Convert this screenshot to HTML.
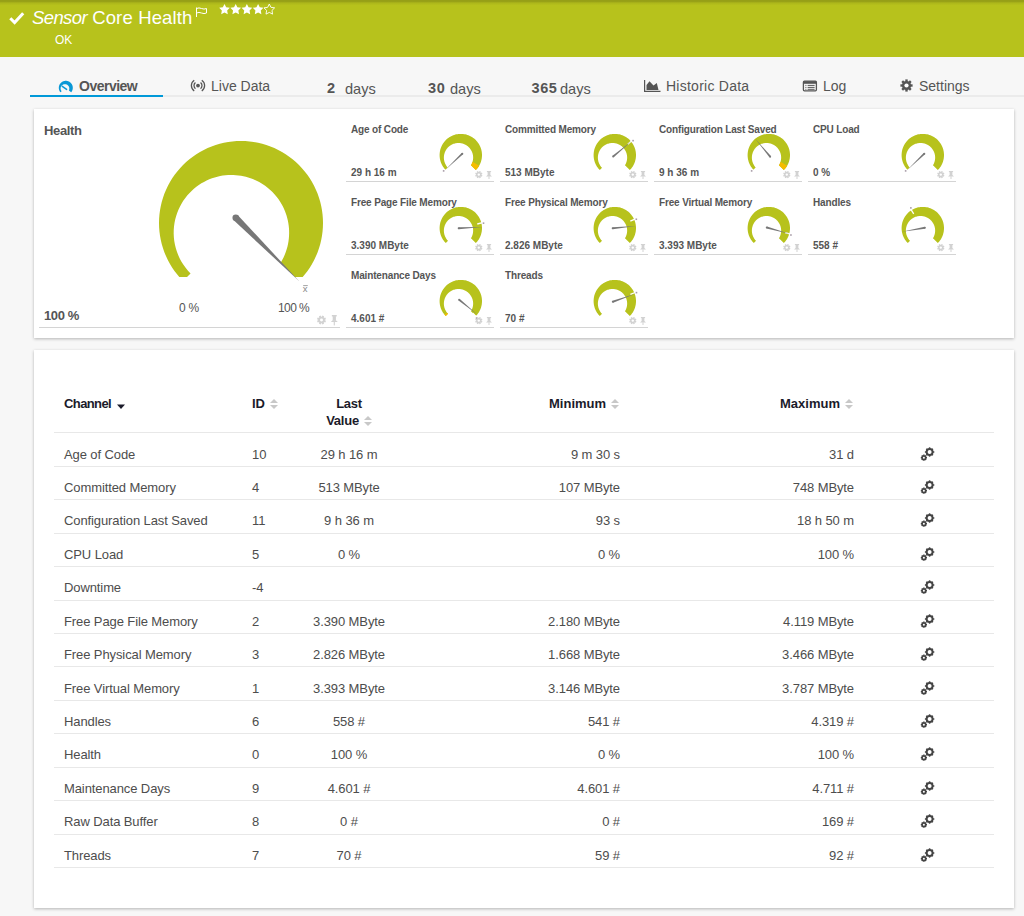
<!DOCTYPE html>
<html><head><meta charset="utf-8"><style>
*{box-sizing:border-box;margin:0;padding:0}
html,body{width:1024px;height:916px;overflow:hidden;background:#f7f7f7;font-family:"Liberation Sans",sans-serif;color:#545454}
.abs{position:absolute;white-space:nowrap}
#hdr{position:absolute;left:0;top:0;width:1024px;height:57px;background:linear-gradient(rgba(0,0,0,.19) 0px,rgba(0,0,0,.17) 1.5px,rgba(0,0,0,.06) 3px,rgba(0,0,0,0) 5.5px),#b7c21c}
#hdr .t{position:absolute;left:32px;top:7px;font-size:18.5px;color:#fff;line-height:22px;white-space:nowrap}
#hdr .ok{position:absolute;left:55px;top:33px;font-size:12px;color:#fff;line-height:14px}
.tab{position:absolute;top:78px;font-size:14px;line-height:16px;color:#555;white-space:nowrap}
.tab b{font-weight:bold}
#tabline{position:absolute;left:30px;top:95px;width:994px;height:2px;background:#ebebeb}
#tabsel{position:absolute;left:30px;top:95px;width:133px;height:2px;background:#0099d8}
.card{position:absolute;left:34px;width:980px;background:#fff;box-shadow:0 1px 3px rgba(0,0,0,.27)}
#c1{top:109px;height:229px}
#c2{top:350px;height:558px}
#gsvg{position:absolute;left:0;top:0}
.gt{position:absolute;font-size:10px;font-weight:bold;line-height:12px;white-space:nowrap;color:#555;letter-spacing:-0.15px}
.gv{position:absolute;font-size:10px;font-weight:bold;line-height:12px;white-space:nowrap;color:#555}
.gl{position:absolute;width:148px;height:1px;background:#d4d4d4}
.ht{position:absolute;font-size:13px;font-weight:bold;line-height:15px;color:#555;white-space:nowrap}
.hs{position:absolute;font-size:12px;line-height:14px;color:#555;white-space:nowrap}
.th{position:absolute;font-size:13px;font-weight:bold;line-height:17px;color:#1b1b2a;white-space:nowrap}
.hl{position:absolute;left:54px;width:940px;height:1px;background:#e8e8e8}
.tr{position:absolute;left:0;width:1024px;height:33px;font-size:13px;color:#4d4d4d;line-height:15px;letter-spacing:-0.1px}
.tr span{position:absolute;top:15px;white-space:nowrap}
.c1{left:64px}
.c2{left:252px}
.c3{left:249px;width:200px;text-align:center}
.c4{right:404px;text-align:right}
.c5{right:170px;text-align:right}
.cog{position:absolute;left:920px;top:15px}
.dn{top:80px;font-size:14.5px;letter-spacing:0.6px}
.dd{top:81px;font-size:14.6px}

</style></head>
<body>
<div id="hdr">
  <svg class="abs" style="left:9px;top:11px" width="16" height="14" viewBox="0 0 16 14"><path d="M1.3 7.3 L5.6 11.6 L14.2 2.2" fill="none" stroke="#fff" stroke-width="3"/></svg>
  <div class="t"><i style="letter-spacing:-0.6px">Sensor</i> <span style="letter-spacing:0.15px">Core Health</span></div>
  <svg class="abs" style="left:195px;top:7px" width="13" height="11" viewBox="0 0 13 11"><path d="M1.5 0.5 V10" fill="none" stroke="#fff" stroke-width="1"/><path d="M1.5 1.5 Q4 0.3 6.5 1.5 T11.5 1.5 V6 Q9 7.2 6.5 6 T1.5 6" fill="none" stroke="#fff" stroke-width="1"/></svg>
  <svg class="abs" style="left:219px;top:4px" width="58" height="12" viewBox="0 0 58 12"><g fill="#fff"><path id="st" d="M5.50 0.00 L7.15 3.33 L10.83 3.87 L8.16 6.47 L8.79 10.13 L5.50 8.40 L2.21 10.13 L2.84 6.47 L0.17 3.87 L3.85 3.33Z"/><use href="#st" x="11.2"/><use href="#st" x="22.4"/><use href="#st" x="33.6"/></g><use href="#st" x="44.8" fill="none" stroke="#fff" stroke-width="0.9"/></svg>
  <div class="ok">OK</div>
</div>
<div id="tabline"></div><div id="tabsel"></div>
<svg class="abs" style="left:0;top:0" width="200" height="100"><path d="M60.44,92.30 L60.21,92.01 L59.99,91.71 L59.80,91.40 L59.61,91.08 L59.45,90.75 L59.30,90.41 L59.17,90.06 L59.06,89.71 L58.97,89.35 L58.90,88.99 L58.85,88.62 L58.81,88.25 L58.80,87.89 L58.81,87.52 L58.83,87.15 L58.87,86.78 L58.94,86.42 L59.02,86.06 L59.12,85.70 L59.24,85.35 L59.38,85.01 L59.54,84.68 L59.71,84.35 L59.90,84.03 L60.11,83.73 L60.33,83.43 L60.57,83.15 L60.82,82.88 L61.09,82.62 L61.37,82.38 L61.66,82.16 L61.96,81.95 L62.28,81.75 L62.60,81.57 L62.93,81.41 L63.27,81.27 L63.62,81.15 L63.97,81.04 L64.33,80.96 L64.70,80.89 L65.06,80.84 L65.43,80.81 L65.80,80.80 L66.17,80.81 L66.54,80.84 L66.90,80.89 L67.27,80.96 L67.63,81.04 L67.98,81.15 L68.33,81.27 L68.67,81.41 L69.00,81.57 L69.32,81.75 L69.64,81.95 L69.94,82.16 L70.23,82.38 L70.51,82.62 L70.78,82.88 L71.03,83.15 L71.27,83.43 L71.49,83.73 L71.70,84.03 L71.89,84.35 L72.06,84.68 L72.22,85.01 L72.36,85.35 L72.48,85.70 L72.58,86.06 L72.66,86.42 L72.73,86.78 L72.77,87.15 L72.79,87.52 L72.80,87.89 L72.79,88.25 L72.75,88.62 L72.70,88.99 L72.63,89.35 L72.54,89.71 L72.43,90.06 L72.30,90.41 L72.15,90.75 L71.99,91.08 L71.80,91.40 L71.61,91.71 L71.39,92.01 L71.16,92.30 L68.87,90.38 L68.96,90.18 L69.04,89.98 L69.11,89.78 L69.16,89.58 L69.21,89.38 L69.25,89.18 L69.27,88.98 L69.29,88.79 L69.30,88.59 L69.30,88.40 L69.29,88.21 L69.27,88.03 L69.25,87.84 L69.22,87.66 L69.18,87.48 L69.13,87.31 L69.08,87.14 L69.02,86.97 L68.96,86.81 L68.89,86.65 L68.81,86.49 L68.72,86.34 L68.64,86.19 L68.54,86.05 L68.44,85.91 L68.34,85.77 L68.23,85.64 L68.11,85.52 L67.99,85.39 L67.87,85.28 L67.74,85.16 L67.60,85.06 L67.46,84.95 L67.31,84.85 L67.16,84.76 L67.01,84.67 L66.85,84.59 L66.69,84.52 L66.52,84.45 L66.34,84.39 L66.17,84.33 L65.99,84.28 L65.80,84.24 L65.61,84.21 L65.42,84.18 L65.22,84.17 L65.02,84.16 L64.82,84.16 L64.61,84.17 L64.40,84.20 L64.20,84.23 L63.99,84.27 L63.77,84.32 L63.56,84.39 L63.35,84.47 L63.15,84.56 L62.94,84.66 L62.74,84.77 L62.54,84.90 L62.34,85.04 L62.15,85.19 L61.97,85.35 L61.79,85.53 L61.63,85.72 L61.47,85.92 L61.32,86.13 L61.19,86.35 L61.07,86.58 L60.96,86.82 L60.86,87.07 L60.78,87.33 L60.72,87.59 L60.67,87.86 L60.64,88.14 L60.62,88.41 L60.62,88.69 L60.65,88.97 L60.69,89.25 L60.74,89.53 L60.82,89.80 L60.91,90.07 L61.02,90.33 L61.15,90.58 L61.30,90.83 L61.46,91.07 L61.64,91.29Z" fill="#0a98d6"/><line x1="62.3" y1="86.3" x2="66.6" y2="89.4" stroke="#0a98d6" stroke-width="1.5" stroke-linecap="round"/></svg>
<div class="tab" style="left:79px;font-weight:bold;letter-spacing:-0.5px">Overview</div>
<svg class="abs" style="left:190px;top:79px" width="16" height="14" viewBox="0 0 16 14"><g fill="none" stroke="#555" stroke-width="1.3"><path d="M10.57 3.54 A4.0 4.0 0 0 1 10.57 9.66"/><path d="M11.79 1.19 A6.6 6.6 0 0 1 11.79 12.01"/><path d="M5.43 9.66 A4.0 4.0 0 0 1 5.43 3.54"/><path d="M4.21 12.01 A6.6 6.6 0 0 1 4.21 1.19"/></g><circle cx="8" cy="6.6" r="1.9" fill="#555"/></svg>
<div class="tab" style="left:211px">Live Data</div>
<div class="tab dn" style="left:327px"><b>2</b></div><div class="tab dd" style="left:345px">days</div><div class="tab dn" style="left:428px"><b>30</b></div><div class="tab dd" style="left:450px">days</div><div class="tab dn" style="left:531.5px"><b>365</b></div><div class="tab dd" style="left:560px">days</div>


<svg class="abs" style="left:644px;top:80px" width="17" height="12" viewBox="0 0 17 12"><path d="M0.6 0 V11.4 H16.5" fill="none" stroke="#555" stroke-width="1.2"/><path d="M2.5 10 V5 L5.5 1.3 L9.5 5.5 L12.8 3 L14.5 10Z" fill="#555"/></svg>
<div class="tab" style="left:666px;letter-spacing:0.25px">Historic Data</div>
<svg class="abs" style="left:802px;top:79.7px" width="16" height="12" viewBox="0 0 16 12"><rect x="1.4" y="1.2" width="13" height="9.6" rx="1" fill="none" stroke="#555" stroke-width="1.3"/><rect x="1.4" y="1.2" width="13" height="2.6" fill="#555"/><g stroke="#555" stroke-width="1"><line x1="3.4" y1="5.4" x2="4.4" y2="5.4"/><line x1="5.6" y1="5.4" x2="12.6" y2="5.4"/><line x1="3.4" y1="7.4" x2="4.4" y2="7.4"/><line x1="5.6" y1="7.4" x2="12.6" y2="7.4"/><line x1="3.4" y1="9.3" x2="4.4" y2="9.3"/><line x1="5.6" y1="9.3" x2="12.6" y2="9.3"/></g></svg>
<div class="tab" style="left:823px">Log</div>
<svg class="abs" style="left:900px;top:79px" width="13" height="13" viewBox="0 0 13 13"><circle cx="6.5" cy="6.5" r="4.6" fill="#555"/><g stroke="#555" stroke-width="2.4"><line x1="6.5" y1="0.4" x2="6.5" y2="12.6"/><line x1="0.4" y1="6.5" x2="12.6" y2="6.5"/><line x1="2.2" y1="2.2" x2="10.8" y2="10.8"/><line x1="10.8" y1="2.2" x2="2.2" y2="10.8"/></g><circle cx="6.5" cy="6.5" r="2.1" fill="#fff"/></svg>
<div class="tab" style="left:919px">Settings</div>

<div class="card" id="c1"></div>
<div class="card" id="c2"></div>

<div class="ht" style="left:44px;top:123px;letter-spacing:-0.35px">Health</div>
<div class="ht" style="left:44px;top:308px;letter-spacing:-0.4px">100 %</div>
<div class="hs" style="left:179px;top:301px;letter-spacing:-0.3px">0 %</div>
<div class="hs" style="left:278px;top:301px;letter-spacing:-0.6px">100 %</div>
<div style="position:absolute;left:39px;top:327px;width:301px;height:1px;background:#d4d4d4"></div>

<div class="gt" style="left:351px;top:124px">Age of Code</div><div class="gv" style="left:351px;top:167px">29 h 16 m</div><div class="gl" style="left:346px;top:181px"></div><div class="gt" style="left:505px;top:124px">Committed Memory</div><div class="gv" style="left:505px;top:167px">513 MByte</div><div class="gl" style="left:500px;top:181px"></div><div class="gt" style="left:659px;top:124px">Configuration Last Saved</div><div class="gv" style="left:659px;top:167px">9 h 36 m</div><div class="gl" style="left:654px;top:181px"></div><div class="gt" style="left:813px;top:124px">CPU Load</div><div class="gv" style="left:813px;top:167px">0 %</div><div class="gl" style="left:808px;top:181px"></div><div class="gt" style="left:351px;top:197px">Free Page File Memory</div><div class="gv" style="left:351px;top:240px">3.390 MByte</div><div class="gl" style="left:346px;top:254px"></div><div class="gt" style="left:505px;top:197px">Free Physical Memory</div><div class="gv" style="left:505px;top:240px">2.826 MByte</div><div class="gl" style="left:500px;top:254px"></div><div class="gt" style="left:659px;top:197px">Free Virtual Memory</div><div class="gv" style="left:659px;top:240px">3.393 MByte</div><div class="gl" style="left:654px;top:254px"></div><div class="gt" style="left:813px;top:197px">Handles</div><div class="gv" style="left:813px;top:240px">558 #</div><div class="gl" style="left:808px;top:254px"></div><div class="gt" style="left:351px;top:270px">Maintenance Days</div><div class="gv" style="left:351px;top:313px">4.601 #</div><div class="gl" style="left:346px;top:327px"></div><div class="gt" style="left:505px;top:270px">Threads</div><div class="gv" style="left:505px;top:313px">70 #</div><div class="gl" style="left:500px;top:327px"></div>
<svg id="gsvg" width="1024" height="916"><path d="M445.81,170.09 L445.05,169.29 L444.32,168.44 L443.65,167.56 L443.02,166.65 L442.44,165.70 L441.91,164.72 L441.43,163.72 L441.01,162.70 L440.64,161.65 L440.32,160.59 L440.06,159.51 L439.86,158.42 L439.72,157.32 L439.63,156.21 L439.60,155.10 L439.63,153.99 L439.72,152.88 L439.86,151.78 L440.06,150.69 L440.32,149.61 L440.64,148.55 L441.01,147.50 L441.43,146.48 L441.91,145.48 L442.44,144.50 L443.02,143.55 L443.65,142.64 L444.32,141.76 L445.05,140.91 L445.81,140.11 L446.61,139.35 L447.46,138.62 L448.34,137.95 L449.25,137.32 L450.20,136.74 L451.18,136.21 L452.18,135.73 L453.20,135.31 L454.25,134.94 L455.31,134.62 L456.39,134.36 L457.48,134.16 L458.58,134.02 L459.69,133.93 L460.80,133.90 L461.91,133.93 L463.02,134.02 L464.12,134.16 L465.21,134.36 L466.29,134.62 L467.35,134.94 L468.40,135.31 L469.42,135.73 L470.42,136.21 L471.40,136.74 L472.35,137.32 L473.26,137.95 L474.14,138.62 L474.99,139.35 L475.79,140.11 L476.55,140.91 L477.28,141.76 L477.95,142.64 L478.58,143.55 L479.16,144.50 L479.69,145.48 L480.17,146.48 L480.59,147.50 L480.96,148.55 L481.28,149.61 L481.54,150.69 L481.74,151.78 L481.88,152.88 L481.97,153.99 L482.00,155.10 L481.97,156.21 L481.88,157.32 L481.74,158.42 L481.54,159.51 L481.28,160.59 L480.96,161.65 L480.59,162.70 L480.17,163.72 L479.69,164.72 L479.16,165.70 L478.58,166.65 L477.95,167.56 L477.28,168.44 L476.55,169.29 L475.79,170.09 L470.97,165.27 L471.35,164.60 L471.70,163.93 L472.01,163.24 L472.28,162.55 L472.51,161.86 L472.70,161.16 L472.85,160.47 L472.98,159.77 L473.06,159.08 L473.12,158.40 L473.14,157.72 L473.13,157.05 L473.09,156.39 L473.02,155.74 L472.92,155.10 L472.80,154.47 L472.65,153.85 L472.48,153.25 L472.28,152.66 L472.06,152.08 L471.81,151.52 L471.55,150.97 L471.27,150.44 L470.96,149.92 L470.64,149.42 L470.29,148.93 L469.93,148.46 L469.56,148.01 L469.16,147.57 L468.75,147.15 L468.32,146.75 L467.87,146.36 L467.41,146.00 L466.94,145.65 L466.45,145.32 L465.94,145.00 L465.43,144.71 L464.89,144.44 L464.35,144.19 L463.79,143.96 L463.21,143.75 L462.63,143.56 L462.03,143.40 L461.42,143.27 L460.80,143.15 L460.17,143.07 L459.53,143.01 L458.88,142.98 L458.22,142.98 L457.56,143.00 L456.89,143.06 L456.21,143.15 L455.54,143.28 L454.86,143.44 L454.18,143.63 L453.50,143.86 L452.83,144.12 L452.16,144.43 L451.49,144.77 L450.84,145.14 L450.20,145.56 L449.58,146.02 L448.97,146.51 L448.39,147.04 L447.83,147.61 L447.29,148.22 L446.78,148.86 L446.31,149.54 L445.87,150.25 L445.46,150.99 L445.10,151.76 L444.78,152.56 L444.50,153.39 L444.28,154.23 L444.10,155.10 L443.97,155.98 L443.90,156.88 L443.88,157.78 L443.92,158.69 L444.02,159.60 L444.17,160.50 L444.38,161.40 L444.65,162.29 L444.98,163.16 L445.36,164.01 L445.80,164.84 L446.29,165.64 L446.83,166.41 L447.42,167.14 L448.06,167.84Z" fill="#b7c21c"/><path d="M479.16,165.70 L478.80,166.30 L478.43,166.88 L478.03,167.45 L477.62,168.01 L477.19,168.55 L476.74,169.08 L476.27,169.59 L475.79,170.09 L470.97,165.27 L471.21,164.85 L471.44,164.43 L471.66,164.01 L471.86,163.59 L472.04,163.16 L472.21,162.73 L472.37,162.29 L472.51,161.86Z" fill="#f5bc00"/><line x1="448.81" y1="167.09" x2="444.31" y2="171.59" stroke="#fff" stroke-width="1.3"/><rect x="442.84" y="170.10" width="1.6" height="1.6" fill="#8a7a8a" opacity="0.75"/><path d="M461.65,152.92 L445.42,169.69 L463.03,154.37Z" fill="#777"/><circle cx="462.34" cy="153.64" r="1.00" fill="#777"/><g fill="#d2d2d2"><circle cx="478.8" cy="174.6" r="2.59"/></g><g stroke="#d2d2d2" stroke-width="1.51"><line x1="475.47" y1="173.22" x2="482.13" y2="175.98"/><line x1="477.42" y1="171.27" x2="480.18" y2="177.93"/><line x1="480.18" y1="171.27" x2="477.42" y2="177.93"/><line x1="482.13" y1="173.22" x2="475.47" y2="175.98"/></g><circle cx="478.8" cy="174.6" r="1.19" fill="#fff"/><g fill="#d2d2d2"><rect x="486.90" y="171" width="4.20" height="1.12"/><rect x="487.62" y="171.80" width="2.76" height="3.60"/><path d="M487.62,175.00 L486.00,176.44 L492.00,176.44 L490.38,175.00Z"/><rect x="488.52" y="176.28" width="0.96" height="2.72"/></g><path d="M599.81,170.09 L599.05,169.29 L598.32,168.44 L597.65,167.56 L597.02,166.65 L596.44,165.70 L595.91,164.72 L595.43,163.72 L595.01,162.70 L594.64,161.65 L594.32,160.59 L594.06,159.51 L593.86,158.42 L593.72,157.32 L593.63,156.21 L593.60,155.10 L593.63,153.99 L593.72,152.88 L593.86,151.78 L594.06,150.69 L594.32,149.61 L594.64,148.55 L595.01,147.50 L595.43,146.48 L595.91,145.48 L596.44,144.50 L597.02,143.55 L597.65,142.64 L598.32,141.76 L599.05,140.91 L599.81,140.11 L600.61,139.35 L601.46,138.62 L602.34,137.95 L603.25,137.32 L604.20,136.74 L605.18,136.21 L606.18,135.73 L607.20,135.31 L608.25,134.94 L609.31,134.62 L610.39,134.36 L611.48,134.16 L612.58,134.02 L613.69,133.93 L614.80,133.90 L615.91,133.93 L617.02,134.02 L618.12,134.16 L619.21,134.36 L620.29,134.62 L621.35,134.94 L622.40,135.31 L623.42,135.73 L624.42,136.21 L625.40,136.74 L626.35,137.32 L627.26,137.95 L628.14,138.62 L628.99,139.35 L629.79,140.11 L630.55,140.91 L631.28,141.76 L631.95,142.64 L632.58,143.55 L633.16,144.50 L633.69,145.48 L634.17,146.48 L634.59,147.50 L634.96,148.55 L635.28,149.61 L635.54,150.69 L635.74,151.78 L635.88,152.88 L635.97,153.99 L636.00,155.10 L635.97,156.21 L635.88,157.32 L635.74,158.42 L635.54,159.51 L635.28,160.59 L634.96,161.65 L634.59,162.70 L634.17,163.72 L633.69,164.72 L633.16,165.70 L632.58,166.65 L631.95,167.56 L631.28,168.44 L630.55,169.29 L629.79,170.09 L624.97,165.27 L625.35,164.60 L625.70,163.93 L626.01,163.24 L626.28,162.55 L626.51,161.86 L626.70,161.16 L626.85,160.47 L626.98,159.77 L627.06,159.08 L627.12,158.40 L627.14,157.72 L627.13,157.05 L627.09,156.39 L627.02,155.74 L626.92,155.10 L626.80,154.47 L626.65,153.85 L626.48,153.25 L626.28,152.66 L626.06,152.08 L625.81,151.52 L625.55,150.97 L625.27,150.44 L624.96,149.92 L624.64,149.42 L624.29,148.93 L623.93,148.46 L623.56,148.01 L623.16,147.57 L622.75,147.15 L622.32,146.75 L621.87,146.36 L621.41,146.00 L620.94,145.65 L620.45,145.32 L619.94,145.00 L619.43,144.71 L618.89,144.44 L618.35,144.19 L617.79,143.96 L617.21,143.75 L616.63,143.56 L616.03,143.40 L615.42,143.27 L614.80,143.15 L614.17,143.07 L613.53,143.01 L612.88,142.98 L612.22,142.98 L611.56,143.00 L610.89,143.06 L610.21,143.15 L609.54,143.28 L608.86,143.44 L608.18,143.63 L607.50,143.86 L606.83,144.12 L606.16,144.43 L605.49,144.77 L604.84,145.14 L604.20,145.56 L603.58,146.02 L602.97,146.51 L602.39,147.04 L601.83,147.61 L601.29,148.22 L600.78,148.86 L600.31,149.54 L599.87,150.25 L599.46,150.99 L599.10,151.76 L598.78,152.56 L598.50,153.39 L598.28,154.23 L598.10,155.10 L597.97,155.98 L597.90,156.88 L597.88,157.78 L597.92,158.69 L598.02,159.60 L598.17,160.50 L598.38,161.40 L598.65,162.29 L598.98,163.16 L599.36,164.01 L599.80,164.84 L600.29,165.64 L600.83,166.41 L601.42,167.14 L602.06,167.84Z" fill="#b7c21c"/><line x1="627.79" y1="144.20" x2="632.66" y2="140.11" stroke="#fff" stroke-width="1.3"/><rect x="632.28" y="139.84" width="1.6" height="1.6" fill="#8a7a8a" opacity="0.75"/><path d="M613.80,157.22 L631.16,141.62 L612.53,155.68Z" fill="#777"/><circle cx="613.16" cy="156.45" r="1.00" fill="#777"/><g fill="#d2d2d2"><circle cx="632.8" cy="174.6" r="2.59"/></g><g stroke="#d2d2d2" stroke-width="1.51"><line x1="629.47" y1="173.22" x2="636.13" y2="175.98"/><line x1="631.42" y1="171.27" x2="634.18" y2="177.93"/><line x1="634.18" y1="171.27" x2="631.42" y2="177.93"/><line x1="636.13" y1="173.22" x2="629.47" y2="175.98"/></g><circle cx="632.8" cy="174.6" r="1.19" fill="#fff"/><g fill="#d2d2d2"><rect x="640.90" y="171" width="4.20" height="1.12"/><rect x="641.62" y="171.80" width="2.76" height="3.60"/><path d="M641.62,175.00 L640.00,176.44 L646.00,176.44 L644.38,175.00Z"/><rect x="642.52" y="176.28" width="0.96" height="2.72"/></g><path d="M753.81,170.09 L753.05,169.29 L752.32,168.44 L751.65,167.56 L751.02,166.65 L750.44,165.70 L749.91,164.72 L749.43,163.72 L749.01,162.70 L748.64,161.65 L748.32,160.59 L748.06,159.51 L747.86,158.42 L747.72,157.32 L747.63,156.21 L747.60,155.10 L747.63,153.99 L747.72,152.88 L747.86,151.78 L748.06,150.69 L748.32,149.61 L748.64,148.55 L749.01,147.50 L749.43,146.48 L749.91,145.48 L750.44,144.50 L751.02,143.55 L751.65,142.64 L752.32,141.76 L753.05,140.91 L753.81,140.11 L754.61,139.35 L755.46,138.62 L756.34,137.95 L757.25,137.32 L758.20,136.74 L759.18,136.21 L760.18,135.73 L761.20,135.31 L762.25,134.94 L763.31,134.62 L764.39,134.36 L765.48,134.16 L766.58,134.02 L767.69,133.93 L768.80,133.90 L769.91,133.93 L771.02,134.02 L772.12,134.16 L773.21,134.36 L774.29,134.62 L775.35,134.94 L776.40,135.31 L777.42,135.73 L778.42,136.21 L779.40,136.74 L780.35,137.32 L781.26,137.95 L782.14,138.62 L782.99,139.35 L783.79,140.11 L784.55,140.91 L785.28,141.76 L785.95,142.64 L786.58,143.55 L787.16,144.50 L787.69,145.48 L788.17,146.48 L788.59,147.50 L788.96,148.55 L789.28,149.61 L789.54,150.69 L789.74,151.78 L789.88,152.88 L789.97,153.99 L790.00,155.10 L789.97,156.21 L789.88,157.32 L789.74,158.42 L789.54,159.51 L789.28,160.59 L788.96,161.65 L788.59,162.70 L788.17,163.72 L787.69,164.72 L787.16,165.70 L786.58,166.65 L785.95,167.56 L785.28,168.44 L784.55,169.29 L783.79,170.09 L778.97,165.27 L779.35,164.60 L779.70,163.93 L780.01,163.24 L780.28,162.55 L780.51,161.86 L780.70,161.16 L780.85,160.47 L780.98,159.77 L781.06,159.08 L781.12,158.40 L781.14,157.72 L781.13,157.05 L781.09,156.39 L781.02,155.74 L780.92,155.10 L780.80,154.47 L780.65,153.85 L780.48,153.25 L780.28,152.66 L780.06,152.08 L779.81,151.52 L779.55,150.97 L779.27,150.44 L778.96,149.92 L778.64,149.42 L778.29,148.93 L777.93,148.46 L777.56,148.01 L777.16,147.57 L776.75,147.15 L776.32,146.75 L775.87,146.36 L775.41,146.00 L774.94,145.65 L774.45,145.32 L773.94,145.00 L773.43,144.71 L772.89,144.44 L772.35,144.19 L771.79,143.96 L771.21,143.75 L770.63,143.56 L770.03,143.40 L769.42,143.27 L768.80,143.15 L768.17,143.07 L767.53,143.01 L766.88,142.98 L766.22,142.98 L765.56,143.00 L764.89,143.06 L764.21,143.15 L763.54,143.28 L762.86,143.44 L762.18,143.63 L761.50,143.86 L760.83,144.12 L760.16,144.43 L759.49,144.77 L758.84,145.14 L758.20,145.56 L757.58,146.02 L756.97,146.51 L756.39,147.04 L755.83,147.61 L755.29,148.22 L754.78,148.86 L754.31,149.54 L753.87,150.25 L753.46,150.99 L753.10,151.76 L752.78,152.56 L752.50,153.39 L752.28,154.23 L752.10,155.10 L751.97,155.98 L751.90,156.88 L751.88,157.78 L751.92,158.69 L752.02,159.60 L752.17,160.50 L752.38,161.40 L752.65,162.29 L752.98,163.16 L753.36,164.01 L753.80,164.84 L754.29,165.64 L754.83,166.41 L755.42,167.14 L756.06,167.84Z" fill="#b7c21c"/><path d="M787.16,165.70 L786.80,166.30 L786.43,166.88 L786.03,167.45 L785.62,168.01 L785.19,168.55 L784.74,169.08 L784.27,169.59 L783.79,170.09 L778.97,165.27 L779.21,164.85 L779.44,164.43 L779.66,164.01 L779.86,163.59 L780.04,163.16 L780.21,162.73 L780.37,162.29 L780.51,161.86Z" fill="#f5bc00"/><line x1="756.81" y1="167.09" x2="752.31" y2="171.59" stroke="#fff" stroke-width="1.3"/><rect x="750.84" y="170.10" width="1.6" height="1.6" fill="#8a7a8a" opacity="0.75"/><path d="M770.92,156.10 L755.32,138.74 L769.38,157.37Z" fill="#777"/><circle cx="770.15" cy="156.74" r="1.00" fill="#777"/><g fill="#d2d2d2"><circle cx="786.8" cy="174.6" r="2.59"/></g><g stroke="#d2d2d2" stroke-width="1.51"><line x1="783.47" y1="173.22" x2="790.13" y2="175.98"/><line x1="785.42" y1="171.27" x2="788.18" y2="177.93"/><line x1="788.18" y1="171.27" x2="785.42" y2="177.93"/><line x1="790.13" y1="173.22" x2="783.47" y2="175.98"/></g><circle cx="786.8" cy="174.6" r="1.19" fill="#fff"/><g fill="#d2d2d2"><rect x="794.90" y="171" width="4.20" height="1.12"/><rect x="795.62" y="171.80" width="2.76" height="3.60"/><path d="M795.62,175.00 L794.00,176.44 L800.00,176.44 L798.38,175.00Z"/><rect x="796.52" y="176.28" width="0.96" height="2.72"/></g><path d="M907.81,170.09 L907.05,169.29 L906.32,168.44 L905.65,167.56 L905.02,166.65 L904.44,165.70 L903.91,164.72 L903.43,163.72 L903.01,162.70 L902.64,161.65 L902.32,160.59 L902.06,159.51 L901.86,158.42 L901.72,157.32 L901.63,156.21 L901.60,155.10 L901.63,153.99 L901.72,152.88 L901.86,151.78 L902.06,150.69 L902.32,149.61 L902.64,148.55 L903.01,147.50 L903.43,146.48 L903.91,145.48 L904.44,144.50 L905.02,143.55 L905.65,142.64 L906.32,141.76 L907.05,140.91 L907.81,140.11 L908.61,139.35 L909.46,138.62 L910.34,137.95 L911.25,137.32 L912.20,136.74 L913.18,136.21 L914.18,135.73 L915.20,135.31 L916.25,134.94 L917.31,134.62 L918.39,134.36 L919.48,134.16 L920.58,134.02 L921.69,133.93 L922.80,133.90 L923.91,133.93 L925.02,134.02 L926.12,134.16 L927.21,134.36 L928.29,134.62 L929.35,134.94 L930.40,135.31 L931.42,135.73 L932.42,136.21 L933.40,136.74 L934.35,137.32 L935.26,137.95 L936.14,138.62 L936.99,139.35 L937.79,140.11 L938.55,140.91 L939.28,141.76 L939.95,142.64 L940.58,143.55 L941.16,144.50 L941.69,145.48 L942.17,146.48 L942.59,147.50 L942.96,148.55 L943.28,149.61 L943.54,150.69 L943.74,151.78 L943.88,152.88 L943.97,153.99 L944.00,155.10 L943.97,156.21 L943.88,157.32 L943.74,158.42 L943.54,159.51 L943.28,160.59 L942.96,161.65 L942.59,162.70 L942.17,163.72 L941.69,164.72 L941.16,165.70 L940.58,166.65 L939.95,167.56 L939.28,168.44 L938.55,169.29 L937.79,170.09 L932.97,165.27 L933.35,164.60 L933.70,163.93 L934.01,163.24 L934.28,162.55 L934.51,161.86 L934.70,161.16 L934.85,160.47 L934.98,159.77 L935.06,159.08 L935.12,158.40 L935.14,157.72 L935.13,157.05 L935.09,156.39 L935.02,155.74 L934.92,155.10 L934.80,154.47 L934.65,153.85 L934.48,153.25 L934.28,152.66 L934.06,152.08 L933.81,151.52 L933.55,150.97 L933.27,150.44 L932.96,149.92 L932.64,149.42 L932.29,148.93 L931.93,148.46 L931.56,148.01 L931.16,147.57 L930.75,147.15 L930.32,146.75 L929.87,146.36 L929.41,146.00 L928.94,145.65 L928.45,145.32 L927.94,145.00 L927.43,144.71 L926.89,144.44 L926.35,144.19 L925.79,143.96 L925.21,143.75 L924.63,143.56 L924.03,143.40 L923.42,143.27 L922.80,143.15 L922.17,143.07 L921.53,143.01 L920.88,142.98 L920.22,142.98 L919.56,143.00 L918.89,143.06 L918.21,143.15 L917.54,143.28 L916.86,143.44 L916.18,143.63 L915.50,143.86 L914.83,144.12 L914.16,144.43 L913.49,144.77 L912.84,145.14 L912.20,145.56 L911.58,146.02 L910.97,146.51 L910.39,147.04 L909.83,147.61 L909.29,148.22 L908.78,148.86 L908.31,149.54 L907.87,150.25 L907.46,150.99 L907.10,151.76 L906.78,152.56 L906.50,153.39 L906.28,154.23 L906.10,155.10 L905.97,155.98 L905.90,156.88 L905.88,157.78 L905.92,158.69 L906.02,159.60 L906.17,160.50 L906.38,161.40 L906.65,162.29 L906.98,163.16 L907.36,164.01 L907.80,164.84 L908.29,165.64 L908.83,166.41 L909.42,167.14 L910.06,167.84Z" fill="#b7c21c"/><line x1="910.81" y1="167.09" x2="906.31" y2="171.59" stroke="#fff" stroke-width="1.3"/><rect x="904.84" y="170.10" width="1.6" height="1.6" fill="#8a7a8a" opacity="0.75"/><path d="M923.63,152.91 L907.55,169.83 L925.02,154.35Z" fill="#777"/><circle cx="924.33" cy="153.63" r="1.00" fill="#777"/><g fill="#d2d2d2"><circle cx="940.8" cy="174.6" r="2.59"/></g><g stroke="#d2d2d2" stroke-width="1.51"><line x1="937.47" y1="173.22" x2="944.13" y2="175.98"/><line x1="939.42" y1="171.27" x2="942.18" y2="177.93"/><line x1="942.18" y1="171.27" x2="939.42" y2="177.93"/><line x1="944.13" y1="173.22" x2="937.47" y2="175.98"/></g><circle cx="940.8" cy="174.6" r="1.19" fill="#fff"/><g fill="#d2d2d2"><rect x="948.90" y="171" width="4.20" height="1.12"/><rect x="949.62" y="171.80" width="2.76" height="3.60"/><path d="M949.62,175.00 L948.00,176.44 L954.00,176.44 L952.38,175.00Z"/><rect x="950.52" y="176.28" width="0.96" height="2.72"/></g><path d="M445.81,243.09 L445.05,242.29 L444.32,241.44 L443.65,240.56 L443.02,239.65 L442.44,238.70 L441.91,237.72 L441.43,236.72 L441.01,235.70 L440.64,234.65 L440.32,233.59 L440.06,232.51 L439.86,231.42 L439.72,230.32 L439.63,229.21 L439.60,228.10 L439.63,226.99 L439.72,225.88 L439.86,224.78 L440.06,223.69 L440.32,222.61 L440.64,221.55 L441.01,220.50 L441.43,219.48 L441.91,218.48 L442.44,217.50 L443.02,216.55 L443.65,215.64 L444.32,214.76 L445.05,213.91 L445.81,213.11 L446.61,212.35 L447.46,211.62 L448.34,210.95 L449.25,210.32 L450.20,209.74 L451.18,209.21 L452.18,208.73 L453.20,208.31 L454.25,207.94 L455.31,207.62 L456.39,207.36 L457.48,207.16 L458.58,207.02 L459.69,206.93 L460.80,206.90 L461.91,206.93 L463.02,207.02 L464.12,207.16 L465.21,207.36 L466.29,207.62 L467.35,207.94 L468.40,208.31 L469.42,208.73 L470.42,209.21 L471.40,209.74 L472.35,210.32 L473.26,210.95 L474.14,211.62 L474.99,212.35 L475.79,213.11 L476.55,213.91 L477.28,214.76 L477.95,215.64 L478.58,216.55 L479.16,217.50 L479.69,218.48 L480.17,219.48 L480.59,220.50 L480.96,221.55 L481.28,222.61 L481.54,223.69 L481.74,224.78 L481.88,225.88 L481.97,226.99 L482.00,228.10 L481.97,229.21 L481.88,230.32 L481.74,231.42 L481.54,232.51 L481.28,233.59 L480.96,234.65 L480.59,235.70 L480.17,236.72 L479.69,237.72 L479.16,238.70 L478.58,239.65 L477.95,240.56 L477.28,241.44 L476.55,242.29 L475.79,243.09 L470.97,238.27 L471.35,237.60 L471.70,236.93 L472.01,236.24 L472.28,235.55 L472.51,234.86 L472.70,234.16 L472.85,233.47 L472.98,232.77 L473.06,232.08 L473.12,231.40 L473.14,230.72 L473.13,230.05 L473.09,229.39 L473.02,228.74 L472.92,228.10 L472.80,227.47 L472.65,226.85 L472.48,226.25 L472.28,225.66 L472.06,225.08 L471.81,224.52 L471.55,223.97 L471.27,223.44 L470.96,222.92 L470.64,222.42 L470.29,221.93 L469.93,221.46 L469.56,221.01 L469.16,220.57 L468.75,220.15 L468.32,219.75 L467.87,219.36 L467.41,219.00 L466.94,218.65 L466.45,218.32 L465.94,218.00 L465.43,217.71 L464.89,217.44 L464.35,217.19 L463.79,216.96 L463.21,216.75 L462.63,216.56 L462.03,216.40 L461.42,216.27 L460.80,216.15 L460.17,216.07 L459.53,216.01 L458.88,215.98 L458.22,215.98 L457.56,216.00 L456.89,216.06 L456.21,216.15 L455.54,216.28 L454.86,216.44 L454.18,216.63 L453.50,216.86 L452.83,217.12 L452.16,217.43 L451.49,217.77 L450.84,218.14 L450.20,218.56 L449.58,219.02 L448.97,219.51 L448.39,220.04 L447.83,220.61 L447.29,221.22 L446.78,221.86 L446.31,222.54 L445.87,223.25 L445.46,223.99 L445.10,224.76 L444.78,225.56 L444.50,226.39 L444.28,227.23 L444.10,228.10 L443.97,228.98 L443.90,229.88 L443.88,230.78 L443.92,231.69 L444.02,232.60 L444.17,233.50 L444.38,234.40 L444.65,235.29 L444.98,236.16 L445.36,237.01 L445.80,237.84 L446.29,238.64 L446.83,239.41 L447.42,240.14 L448.06,240.84Z" fill="#b7c21c"/><line x1="477.26" y1="224.00" x2="483.43" y2="222.46" stroke="#fff" stroke-width="1.3"/><rect x="482.71" y="222.35" width="1.6" height="1.6" fill="#8a7a8a" opacity="0.75"/><path d="M458.74,229.21 L481.97,226.99 L458.63,227.21Z" fill="#777"/><circle cx="458.68" cy="228.21" r="1.00" fill="#777"/><g fill="#d2d2d2"><circle cx="478.8" cy="247.6" r="2.59"/></g><g stroke="#d2d2d2" stroke-width="1.51"><line x1="475.47" y1="246.22" x2="482.13" y2="248.98"/><line x1="477.42" y1="244.27" x2="480.18" y2="250.93"/><line x1="480.18" y1="244.27" x2="477.42" y2="250.93"/><line x1="482.13" y1="246.22" x2="475.47" y2="248.98"/></g><circle cx="478.8" cy="247.6" r="1.19" fill="#fff"/><g fill="#d2d2d2"><rect x="486.90" y="244" width="4.20" height="1.12"/><rect x="487.62" y="244.80" width="2.76" height="3.60"/><path d="M487.62,248.00 L486.00,249.44 L492.00,249.44 L490.38,248.00Z"/><rect x="488.52" y="249.28" width="0.96" height="2.72"/></g><path d="M599.81,243.09 L599.05,242.29 L598.32,241.44 L597.65,240.56 L597.02,239.65 L596.44,238.70 L595.91,237.72 L595.43,236.72 L595.01,235.70 L594.64,234.65 L594.32,233.59 L594.06,232.51 L593.86,231.42 L593.72,230.32 L593.63,229.21 L593.60,228.10 L593.63,226.99 L593.72,225.88 L593.86,224.78 L594.06,223.69 L594.32,222.61 L594.64,221.55 L595.01,220.50 L595.43,219.48 L595.91,218.48 L596.44,217.50 L597.02,216.55 L597.65,215.64 L598.32,214.76 L599.05,213.91 L599.81,213.11 L600.61,212.35 L601.46,211.62 L602.34,210.95 L603.25,210.32 L604.20,209.74 L605.18,209.21 L606.18,208.73 L607.20,208.31 L608.25,207.94 L609.31,207.62 L610.39,207.36 L611.48,207.16 L612.58,207.02 L613.69,206.93 L614.80,206.90 L615.91,206.93 L617.02,207.02 L618.12,207.16 L619.21,207.36 L620.29,207.62 L621.35,207.94 L622.40,208.31 L623.42,208.73 L624.42,209.21 L625.40,209.74 L626.35,210.32 L627.26,210.95 L628.14,211.62 L628.99,212.35 L629.79,213.11 L630.55,213.91 L631.28,214.76 L631.95,215.64 L632.58,216.55 L633.16,217.50 L633.69,218.48 L634.17,219.48 L634.59,220.50 L634.96,221.55 L635.28,222.61 L635.54,223.69 L635.74,224.78 L635.88,225.88 L635.97,226.99 L636.00,228.10 L635.97,229.21 L635.88,230.32 L635.74,231.42 L635.54,232.51 L635.28,233.59 L634.96,234.65 L634.59,235.70 L634.17,236.72 L633.69,237.72 L633.16,238.70 L632.58,239.65 L631.95,240.56 L631.28,241.44 L630.55,242.29 L629.79,243.09 L624.97,238.27 L625.35,237.60 L625.70,236.93 L626.01,236.24 L626.28,235.55 L626.51,234.86 L626.70,234.16 L626.85,233.47 L626.98,232.77 L627.06,232.08 L627.12,231.40 L627.14,230.72 L627.13,230.05 L627.09,229.39 L627.02,228.74 L626.92,228.10 L626.80,227.47 L626.65,226.85 L626.48,226.25 L626.28,225.66 L626.06,225.08 L625.81,224.52 L625.55,223.97 L625.27,223.44 L624.96,222.92 L624.64,222.42 L624.29,221.93 L623.93,221.46 L623.56,221.01 L623.16,220.57 L622.75,220.15 L622.32,219.75 L621.87,219.36 L621.41,219.00 L620.94,218.65 L620.45,218.32 L619.94,218.00 L619.43,217.71 L618.89,217.44 L618.35,217.19 L617.79,216.96 L617.21,216.75 L616.63,216.56 L616.03,216.40 L615.42,216.27 L614.80,216.15 L614.17,216.07 L613.53,216.01 L612.88,215.98 L612.22,215.98 L611.56,216.00 L610.89,216.06 L610.21,216.15 L609.54,216.28 L608.86,216.44 L608.18,216.63 L607.50,216.86 L606.83,217.12 L606.16,217.43 L605.49,217.77 L604.84,218.14 L604.20,218.56 L603.58,219.02 L602.97,219.51 L602.39,220.04 L601.83,220.61 L601.29,221.22 L600.78,221.86 L600.31,222.54 L599.87,223.25 L599.46,223.99 L599.10,224.76 L598.78,225.56 L598.50,226.39 L598.28,227.23 L598.10,228.10 L597.97,228.98 L597.90,229.88 L597.88,230.78 L597.92,231.69 L598.02,232.60 L598.17,233.50 L598.38,234.40 L598.65,235.29 L598.98,236.16 L599.36,237.01 L599.80,237.84 L600.29,238.64 L600.83,239.41 L601.42,240.14 L602.06,240.84Z" fill="#b7c21c"/><line x1="630.29" y1="221.20" x2="636.10" y2="218.61" stroke="#fff" stroke-width="1.3"/><rect x="635.52" y="218.46" width="1.6" height="1.6" fill="#8a7a8a" opacity="0.75"/><path d="M612.80,229.32 L635.88,225.88 L612.59,227.33Z" fill="#777"/><circle cx="612.69" cy="228.32" r="1.00" fill="#777"/><g fill="#d2d2d2"><circle cx="632.8" cy="247.6" r="2.59"/></g><g stroke="#d2d2d2" stroke-width="1.51"><line x1="629.47" y1="246.22" x2="636.13" y2="248.98"/><line x1="631.42" y1="244.27" x2="634.18" y2="250.93"/><line x1="634.18" y1="244.27" x2="631.42" y2="250.93"/><line x1="636.13" y1="246.22" x2="629.47" y2="248.98"/></g><circle cx="632.8" cy="247.6" r="1.19" fill="#fff"/><g fill="#d2d2d2"><rect x="640.90" y="244" width="4.20" height="1.12"/><rect x="641.62" y="244.80" width="2.76" height="3.60"/><path d="M641.62,248.00 L640.00,249.44 L646.00,249.44 L644.38,248.00Z"/><rect x="642.52" y="249.28" width="0.96" height="2.72"/></g><path d="M753.81,243.09 L753.05,242.29 L752.32,241.44 L751.65,240.56 L751.02,239.65 L750.44,238.70 L749.91,237.72 L749.43,236.72 L749.01,235.70 L748.64,234.65 L748.32,233.59 L748.06,232.51 L747.86,231.42 L747.72,230.32 L747.63,229.21 L747.60,228.10 L747.63,226.99 L747.72,225.88 L747.86,224.78 L748.06,223.69 L748.32,222.61 L748.64,221.55 L749.01,220.50 L749.43,219.48 L749.91,218.48 L750.44,217.50 L751.02,216.55 L751.65,215.64 L752.32,214.76 L753.05,213.91 L753.81,213.11 L754.61,212.35 L755.46,211.62 L756.34,210.95 L757.25,210.32 L758.20,209.74 L759.18,209.21 L760.18,208.73 L761.20,208.31 L762.25,207.94 L763.31,207.62 L764.39,207.36 L765.48,207.16 L766.58,207.02 L767.69,206.93 L768.80,206.90 L769.91,206.93 L771.02,207.02 L772.12,207.16 L773.21,207.36 L774.29,207.62 L775.35,207.94 L776.40,208.31 L777.42,208.73 L778.42,209.21 L779.40,209.74 L780.35,210.32 L781.26,210.95 L782.14,211.62 L782.99,212.35 L783.79,213.11 L784.55,213.91 L785.28,214.76 L785.95,215.64 L786.58,216.55 L787.16,217.50 L787.69,218.48 L788.17,219.48 L788.59,220.50 L788.96,221.55 L789.28,222.61 L789.54,223.69 L789.74,224.78 L789.88,225.88 L789.97,226.99 L790.00,228.10 L789.97,229.21 L789.88,230.32 L789.74,231.42 L789.54,232.51 L789.28,233.59 L788.96,234.65 L788.59,235.70 L788.17,236.72 L787.69,237.72 L787.16,238.70 L786.58,239.65 L785.95,240.56 L785.28,241.44 L784.55,242.29 L783.79,243.09 L778.97,238.27 L779.35,237.60 L779.70,236.93 L780.01,236.24 L780.28,235.55 L780.51,234.86 L780.70,234.16 L780.85,233.47 L780.98,232.77 L781.06,232.08 L781.12,231.40 L781.14,230.72 L781.13,230.05 L781.09,229.39 L781.02,228.74 L780.92,228.10 L780.80,227.47 L780.65,226.85 L780.48,226.25 L780.28,225.66 L780.06,225.08 L779.81,224.52 L779.55,223.97 L779.27,223.44 L778.96,222.92 L778.64,222.42 L778.29,221.93 L777.93,221.46 L777.56,221.01 L777.16,220.57 L776.75,220.15 L776.32,219.75 L775.87,219.36 L775.41,219.00 L774.94,218.65 L774.45,218.32 L773.94,218.00 L773.43,217.71 L772.89,217.44 L772.35,217.19 L771.79,216.96 L771.21,216.75 L770.63,216.56 L770.03,216.40 L769.42,216.27 L768.80,216.15 L768.17,216.07 L767.53,216.01 L766.88,215.98 L766.22,215.98 L765.56,216.00 L764.89,216.06 L764.21,216.15 L763.54,216.28 L762.86,216.44 L762.18,216.63 L761.50,216.86 L760.83,217.12 L760.16,217.43 L759.49,217.77 L758.84,218.14 L758.20,218.56 L757.58,219.02 L756.97,219.51 L756.39,220.04 L755.83,220.61 L755.29,221.22 L754.78,221.86 L754.31,222.54 L753.87,223.25 L753.46,223.99 L753.10,224.76 L752.78,225.56 L752.50,226.39 L752.28,227.23 L752.10,228.10 L751.97,228.98 L751.90,229.88 L751.88,230.78 L751.92,231.69 L752.02,232.60 L752.17,233.50 L752.38,234.40 L752.65,235.29 L752.98,236.16 L753.36,237.01 L753.80,237.84 L754.29,238.64 L754.83,239.41 L755.42,240.14 L756.06,240.84Z" fill="#b7c21c"/><line x1="785.14" y1="232.63" x2="791.27" y2="234.33" stroke="#fff" stroke-width="1.3"/><rect x="790.14" y="234.21" width="1.6" height="1.6" fill="#8a7a8a" opacity="0.75"/><path d="M766.49,228.50 L789.23,233.77 L767.02,226.57Z" fill="#777"/><circle cx="766.76" cy="227.53" r="1.00" fill="#777"/><g fill="#d2d2d2"><circle cx="786.8" cy="247.6" r="2.59"/></g><g stroke="#d2d2d2" stroke-width="1.51"><line x1="783.47" y1="246.22" x2="790.13" y2="248.98"/><line x1="785.42" y1="244.27" x2="788.18" y2="250.93"/><line x1="788.18" y1="244.27" x2="785.42" y2="250.93"/><line x1="790.13" y1="246.22" x2="783.47" y2="248.98"/></g><circle cx="786.8" cy="247.6" r="1.19" fill="#fff"/><g fill="#d2d2d2"><rect x="794.90" y="244" width="4.20" height="1.12"/><rect x="795.62" y="244.80" width="2.76" height="3.60"/><path d="M795.62,248.00 L794.00,249.44 L800.00,249.44 L798.38,248.00Z"/><rect x="796.52" y="249.28" width="0.96" height="2.72"/></g><path d="M907.81,243.09 L907.05,242.29 L906.32,241.44 L905.65,240.56 L905.02,239.65 L904.44,238.70 L903.91,237.72 L903.43,236.72 L903.01,235.70 L902.64,234.65 L902.32,233.59 L902.06,232.51 L901.86,231.42 L901.72,230.32 L901.63,229.21 L901.60,228.10 L901.63,226.99 L901.72,225.88 L901.86,224.78 L902.06,223.69 L902.32,222.61 L902.64,221.55 L903.01,220.50 L903.43,219.48 L903.91,218.48 L904.44,217.50 L905.02,216.55 L905.65,215.64 L906.32,214.76 L907.05,213.91 L907.81,213.11 L908.61,212.35 L909.46,211.62 L910.34,210.95 L911.25,210.32 L912.20,209.74 L913.18,209.21 L914.18,208.73 L915.20,208.31 L916.25,207.94 L917.31,207.62 L918.39,207.36 L919.48,207.16 L920.58,207.02 L921.69,206.93 L922.80,206.90 L923.91,206.93 L925.02,207.02 L926.12,207.16 L927.21,207.36 L928.29,207.62 L929.35,207.94 L930.40,208.31 L931.42,208.73 L932.42,209.21 L933.40,209.74 L934.35,210.32 L935.26,210.95 L936.14,211.62 L936.99,212.35 L937.79,213.11 L938.55,213.91 L939.28,214.76 L939.95,215.64 L940.58,216.55 L941.16,217.50 L941.69,218.48 L942.17,219.48 L942.59,220.50 L942.96,221.55 L943.28,222.61 L943.54,223.69 L943.74,224.78 L943.88,225.88 L943.97,226.99 L944.00,228.10 L943.97,229.21 L943.88,230.32 L943.74,231.42 L943.54,232.51 L943.28,233.59 L942.96,234.65 L942.59,235.70 L942.17,236.72 L941.69,237.72 L941.16,238.70 L940.58,239.65 L939.95,240.56 L939.28,241.44 L938.55,242.29 L937.79,243.09 L932.97,238.27 L933.35,237.60 L933.70,236.93 L934.01,236.24 L934.28,235.55 L934.51,234.86 L934.70,234.16 L934.85,233.47 L934.98,232.77 L935.06,232.08 L935.12,231.40 L935.14,230.72 L935.13,230.05 L935.09,229.39 L935.02,228.74 L934.92,228.10 L934.80,227.47 L934.65,226.85 L934.48,226.25 L934.28,225.66 L934.06,225.08 L933.81,224.52 L933.55,223.97 L933.27,223.44 L932.96,222.92 L932.64,222.42 L932.29,221.93 L931.93,221.46 L931.56,221.01 L931.16,220.57 L930.75,220.15 L930.32,219.75 L929.87,219.36 L929.41,219.00 L928.94,218.65 L928.45,218.32 L927.94,218.00 L927.43,217.71 L926.89,217.44 L926.35,217.19 L925.79,216.96 L925.21,216.75 L924.63,216.56 L924.03,216.40 L923.42,216.27 L922.80,216.15 L922.17,216.07 L921.53,216.01 L920.88,215.98 L920.22,215.98 L919.56,216.00 L918.89,216.06 L918.21,216.15 L917.54,216.28 L916.86,216.44 L916.18,216.63 L915.50,216.86 L914.83,217.12 L914.16,217.43 L913.49,217.77 L912.84,218.14 L912.20,218.56 L911.58,219.02 L910.97,219.51 L910.39,220.04 L909.83,220.61 L909.29,221.22 L908.78,221.86 L908.31,222.54 L907.87,223.25 L907.46,223.99 L907.10,224.76 L906.78,225.56 L906.50,226.39 L906.28,227.23 L906.10,228.10 L905.97,228.98 L905.90,229.88 L905.88,230.78 L905.92,231.69 L906.02,232.60 L906.17,233.50 L906.38,234.40 L906.65,235.29 L906.98,236.16 L907.36,237.01 L907.80,237.84 L908.29,238.64 L908.83,239.41 L909.42,240.14 L910.06,240.84Z" fill="#b7c21c"/><line x1="913.69" y1="213.80" x2="910.27" y2="208.43" stroke="#fff" stroke-width="1.3"/><rect x="910.06" y="207.11" width="1.6" height="1.6" fill="#8a7a8a" opacity="0.75"/><path d="M924.71,226.75 L901.92,231.78 L925.06,228.72Z" fill="#777"/><circle cx="924.89" cy="227.73" r="1.00" fill="#777"/><g fill="#d2d2d2"><circle cx="940.8" cy="247.6" r="2.59"/></g><g stroke="#d2d2d2" stroke-width="1.51"><line x1="937.47" y1="246.22" x2="944.13" y2="248.98"/><line x1="939.42" y1="244.27" x2="942.18" y2="250.93"/><line x1="942.18" y1="244.27" x2="939.42" y2="250.93"/><line x1="944.13" y1="246.22" x2="937.47" y2="248.98"/></g><circle cx="940.8" cy="247.6" r="1.19" fill="#fff"/><g fill="#d2d2d2"><rect x="948.90" y="244" width="4.20" height="1.12"/><rect x="949.62" y="244.80" width="2.76" height="3.60"/><path d="M949.62,248.00 L948.00,249.44 L954.00,249.44 L952.38,248.00Z"/><rect x="950.52" y="249.28" width="0.96" height="2.72"/></g><path d="M445.81,316.09 L445.05,315.29 L444.32,314.44 L443.65,313.56 L443.02,312.65 L442.44,311.70 L441.91,310.72 L441.43,309.72 L441.01,308.70 L440.64,307.65 L440.32,306.59 L440.06,305.51 L439.86,304.42 L439.72,303.32 L439.63,302.21 L439.60,301.10 L439.63,299.99 L439.72,298.88 L439.86,297.78 L440.06,296.69 L440.32,295.61 L440.64,294.55 L441.01,293.50 L441.43,292.48 L441.91,291.48 L442.44,290.50 L443.02,289.55 L443.65,288.64 L444.32,287.76 L445.05,286.91 L445.81,286.11 L446.61,285.35 L447.46,284.62 L448.34,283.95 L449.25,283.32 L450.20,282.74 L451.18,282.21 L452.18,281.73 L453.20,281.31 L454.25,280.94 L455.31,280.62 L456.39,280.36 L457.48,280.16 L458.58,280.02 L459.69,279.93 L460.80,279.90 L461.91,279.93 L463.02,280.02 L464.12,280.16 L465.21,280.36 L466.29,280.62 L467.35,280.94 L468.40,281.31 L469.42,281.73 L470.42,282.21 L471.40,282.74 L472.35,283.32 L473.26,283.95 L474.14,284.62 L474.99,285.35 L475.79,286.11 L476.55,286.91 L477.28,287.76 L477.95,288.64 L478.58,289.55 L479.16,290.50 L479.69,291.48 L480.17,292.48 L480.59,293.50 L480.96,294.55 L481.28,295.61 L481.54,296.69 L481.74,297.78 L481.88,298.88 L481.97,299.99 L482.00,301.10 L481.97,302.21 L481.88,303.32 L481.74,304.42 L481.54,305.51 L481.28,306.59 L480.96,307.65 L480.59,308.70 L480.17,309.72 L479.69,310.72 L479.16,311.70 L478.58,312.65 L477.95,313.56 L477.28,314.44 L476.55,315.29 L475.79,316.09 L470.97,311.27 L471.35,310.60 L471.70,309.93 L472.01,309.24 L472.28,308.55 L472.51,307.86 L472.70,307.16 L472.85,306.47 L472.98,305.77 L473.06,305.08 L473.12,304.40 L473.14,303.72 L473.13,303.05 L473.09,302.39 L473.02,301.74 L472.92,301.10 L472.80,300.47 L472.65,299.85 L472.48,299.25 L472.28,298.66 L472.06,298.08 L471.81,297.52 L471.55,296.97 L471.27,296.44 L470.96,295.92 L470.64,295.42 L470.29,294.93 L469.93,294.46 L469.56,294.01 L469.16,293.57 L468.75,293.15 L468.32,292.75 L467.87,292.36 L467.41,292.00 L466.94,291.65 L466.45,291.32 L465.94,291.00 L465.43,290.71 L464.89,290.44 L464.35,290.19 L463.79,289.96 L463.21,289.75 L462.63,289.56 L462.03,289.40 L461.42,289.27 L460.80,289.15 L460.17,289.07 L459.53,289.01 L458.88,288.98 L458.22,288.98 L457.56,289.00 L456.89,289.06 L456.21,289.15 L455.54,289.28 L454.86,289.44 L454.18,289.63 L453.50,289.86 L452.83,290.12 L452.16,290.43 L451.49,290.77 L450.84,291.14 L450.20,291.56 L449.58,292.02 L448.97,292.51 L448.39,293.04 L447.83,293.61 L447.29,294.22 L446.78,294.86 L446.31,295.54 L445.87,296.25 L445.46,296.99 L445.10,297.76 L444.78,298.56 L444.50,299.39 L444.28,300.23 L444.10,301.10 L443.97,301.98 L443.90,302.88 L443.88,303.78 L443.92,304.69 L444.02,305.60 L444.17,306.50 L444.38,307.40 L444.65,308.29 L444.98,309.16 L445.36,310.01 L445.80,310.84 L446.29,311.64 L446.83,312.41 L447.42,313.14 L448.06,313.84Z" fill="#b7c21c"/><path d="M445.81,316.09 L445.65,315.93 L445.49,315.76 L445.33,315.59 L445.17,315.42 L445.01,315.25 L444.86,315.08 L444.71,314.90 L444.56,314.73 L447.02,312.66 L447.15,312.81 L447.27,312.96 L447.40,313.11 L447.53,313.26 L447.66,313.41 L447.79,313.55 L447.92,313.70 L448.06,313.84Z" fill="#f5bc00"/><line x1="472.79" y1="313.09" x2="477.29" y2="317.59" stroke="#fff" stroke-width="1.3"/><rect x="475.80" y="317.26" width="1.6" height="1.6" fill="#8a7a8a" opacity="0.75"/><path d="M458.52,300.54 L477.28,314.44 L459.78,298.99Z" fill="#777"/><circle cx="459.15" cy="299.77" r="1.00" fill="#777"/><g fill="#d2d2d2"><circle cx="478.8" cy="320.6" r="2.59"/></g><g stroke="#d2d2d2" stroke-width="1.51"><line x1="475.47" y1="319.22" x2="482.13" y2="321.98"/><line x1="477.42" y1="317.27" x2="480.18" y2="323.93"/><line x1="480.18" y1="317.27" x2="477.42" y2="323.93"/><line x1="482.13" y1="319.22" x2="475.47" y2="321.98"/></g><circle cx="478.8" cy="320.6" r="1.19" fill="#fff"/><g fill="#d2d2d2"><rect x="486.90" y="317" width="4.20" height="1.12"/><rect x="487.62" y="317.80" width="2.76" height="3.60"/><path d="M487.62,321.00 L486.00,322.44 L492.00,322.44 L490.38,321.00Z"/><rect x="488.52" y="322.28" width="0.96" height="2.72"/></g><path d="M599.81,316.09 L599.05,315.29 L598.32,314.44 L597.65,313.56 L597.02,312.65 L596.44,311.70 L595.91,310.72 L595.43,309.72 L595.01,308.70 L594.64,307.65 L594.32,306.59 L594.06,305.51 L593.86,304.42 L593.72,303.32 L593.63,302.21 L593.60,301.10 L593.63,299.99 L593.72,298.88 L593.86,297.78 L594.06,296.69 L594.32,295.61 L594.64,294.55 L595.01,293.50 L595.43,292.48 L595.91,291.48 L596.44,290.50 L597.02,289.55 L597.65,288.64 L598.32,287.76 L599.05,286.91 L599.81,286.11 L600.61,285.35 L601.46,284.62 L602.34,283.95 L603.25,283.32 L604.20,282.74 L605.18,282.21 L606.18,281.73 L607.20,281.31 L608.25,280.94 L609.31,280.62 L610.39,280.36 L611.48,280.16 L612.58,280.02 L613.69,279.93 L614.80,279.90 L615.91,279.93 L617.02,280.02 L618.12,280.16 L619.21,280.36 L620.29,280.62 L621.35,280.94 L622.40,281.31 L623.42,281.73 L624.42,282.21 L625.40,282.74 L626.35,283.32 L627.26,283.95 L628.14,284.62 L628.99,285.35 L629.79,286.11 L630.55,286.91 L631.28,287.76 L631.95,288.64 L632.58,289.55 L633.16,290.50 L633.69,291.48 L634.17,292.48 L634.59,293.50 L634.96,294.55 L635.28,295.61 L635.54,296.69 L635.74,297.78 L635.88,298.88 L635.97,299.99 L636.00,301.10 L635.97,302.21 L635.88,303.32 L635.74,304.42 L635.54,305.51 L635.28,306.59 L634.96,307.65 L634.59,308.70 L634.17,309.72 L633.69,310.72 L633.16,311.70 L632.58,312.65 L631.95,313.56 L631.28,314.44 L630.55,315.29 L629.79,316.09 L624.97,311.27 L625.35,310.60 L625.70,309.93 L626.01,309.24 L626.28,308.55 L626.51,307.86 L626.70,307.16 L626.85,306.47 L626.98,305.77 L627.06,305.08 L627.12,304.40 L627.14,303.72 L627.13,303.05 L627.09,302.39 L627.02,301.74 L626.92,301.10 L626.80,300.47 L626.65,299.85 L626.48,299.25 L626.28,298.66 L626.06,298.08 L625.81,297.52 L625.55,296.97 L625.27,296.44 L624.96,295.92 L624.64,295.42 L624.29,294.93 L623.93,294.46 L623.56,294.01 L623.16,293.57 L622.75,293.15 L622.32,292.75 L621.87,292.36 L621.41,292.00 L620.94,291.65 L620.45,291.32 L619.94,291.00 L619.43,290.71 L618.89,290.44 L618.35,290.19 L617.79,289.96 L617.21,289.75 L616.63,289.56 L616.03,289.40 L615.42,289.27 L614.80,289.15 L614.17,289.07 L613.53,289.01 L612.88,288.98 L612.22,288.98 L611.56,289.00 L610.89,289.06 L610.21,289.15 L609.54,289.28 L608.86,289.44 L608.18,289.63 L607.50,289.86 L606.83,290.12 L606.16,290.43 L605.49,290.77 L604.84,291.14 L604.20,291.56 L603.58,292.02 L602.97,292.51 L602.39,293.04 L601.83,293.61 L601.29,294.22 L600.78,294.86 L600.31,295.54 L599.87,296.25 L599.46,296.99 L599.10,297.76 L598.78,298.56 L598.50,299.39 L598.28,300.23 L598.10,301.10 L597.97,301.98 L597.90,302.88 L597.88,303.78 L597.92,304.69 L598.02,305.60 L598.17,306.50 L598.38,307.40 L598.65,308.29 L598.98,309.16 L599.36,310.01 L599.80,310.84 L600.29,311.64 L600.83,312.41 L601.42,313.14 L602.06,313.84Z" fill="#b7c21c"/><line x1="630.41" y1="294.47" x2="636.27" y2="291.99" stroke="#fff" stroke-width="1.3"/><rect x="635.67" y="291.84" width="1.6" height="1.6" fill="#8a7a8a" opacity="0.75"/><path d="M613.14,302.75 L634.78,294.02 L612.47,300.87Z" fill="#777"/><circle cx="612.80" cy="301.81" r="1.00" fill="#777"/><g fill="#d2d2d2"><circle cx="632.8" cy="320.6" r="2.59"/></g><g stroke="#d2d2d2" stroke-width="1.51"><line x1="629.47" y1="319.22" x2="636.13" y2="321.98"/><line x1="631.42" y1="317.27" x2="634.18" y2="323.93"/><line x1="634.18" y1="317.27" x2="631.42" y2="323.93"/><line x1="636.13" y1="319.22" x2="629.47" y2="321.98"/></g><circle cx="632.8" cy="320.6" r="1.19" fill="#fff"/><g fill="#d2d2d2"><rect x="640.90" y="317" width="4.20" height="1.12"/><rect x="641.62" y="317.80" width="2.76" height="3.60"/><path d="M641.62,321.00 L640.00,322.44 L646.00,322.44 L644.38,321.00Z"/><rect x="642.52" y="322.28" width="0.96" height="2.72"/></g><clipPath id="bgclip"><rect x="100" y="100" width="300" height="177"/></clipPath><path d="M183.02,280.98 L180.06,277.87 L177.27,274.60 L174.66,271.20 L172.23,267.66 L169.99,264.00 L167.94,260.23 L166.09,256.35 L164.45,252.39 L163.01,248.34 L161.79,244.22 L160.79,240.05 L160.01,235.83 L159.45,231.57 L159.11,227.29 L159.00,223.00 L159.11,218.71 L159.45,214.43 L160.01,210.17 L160.79,205.95 L161.79,201.78 L163.01,197.66 L164.45,193.61 L166.09,189.65 L167.94,185.77 L169.99,182.00 L172.23,178.34 L174.66,174.80 L177.27,171.40 L180.06,168.13 L183.02,165.02 L186.13,162.06 L189.40,159.27 L192.80,156.66 L196.34,154.23 L200.00,151.99 L203.77,149.94 L207.65,148.09 L211.61,146.45 L215.66,145.01 L219.78,143.79 L223.95,142.79 L228.17,142.01 L232.43,141.45 L236.71,141.11 L241.00,141.00 L245.29,141.11 L249.57,141.45 L253.83,142.01 L258.05,142.79 L262.22,143.79 L266.34,145.01 L270.39,146.45 L274.35,148.09 L278.23,149.94 L282.00,151.99 L285.66,154.23 L289.20,156.66 L292.60,159.27 L295.87,162.06 L298.98,165.02 L301.94,168.13 L304.73,171.40 L307.34,174.80 L309.77,178.34 L312.01,182.00 L314.06,185.77 L315.91,189.65 L317.55,193.61 L318.99,197.66 L320.21,201.78 L321.21,205.95 L321.99,210.17 L322.55,214.43 L322.89,218.71 L323.00,223.00 L322.89,227.29 L322.55,231.57 L321.99,235.83 L321.21,240.05 L320.21,244.22 L318.99,248.34 L317.55,252.39 L315.91,256.35 L314.06,260.23 L312.01,264.00 L309.77,267.66 L307.34,271.20 L304.73,274.60 L301.94,277.87 L298.98,280.98 L280.71,262.71 L282.20,260.10 L283.55,257.45 L284.74,254.78 L285.78,252.08 L286.67,249.37 L287.42,246.65 L288.03,243.94 L288.50,241.23 L288.84,238.54 L289.05,235.87 L289.13,233.23 L289.10,230.62 L288.95,228.04 L288.69,225.50 L288.32,223.00 L287.84,220.54 L287.27,218.14 L286.61,215.78 L285.84,213.47 L285.00,211.21 L284.06,209.01 L283.04,206.86 L281.94,204.77 L280.76,202.74 L279.51,200.76 L278.19,198.85 L276.79,197.00 L275.32,195.21 L273.79,193.48 L272.18,191.82 L270.52,190.22 L268.79,188.69 L266.99,187.22 L265.14,185.83 L263.22,184.51 L261.25,183.26 L259.22,182.09 L257.12,180.99 L254.98,179.98 L252.78,179.05 L250.52,178.20 L248.21,177.45 L245.86,176.79 L243.45,176.22 L241.00,175.75 L238.50,175.39 L235.97,175.13 L233.39,174.98 L230.79,174.95 L228.15,175.04 L225.49,175.25 L222.80,175.59 L220.10,176.07 L217.40,176.67 L214.69,177.42 L211.98,178.31 L209.29,179.35 L206.62,180.54 L203.98,181.88 L201.37,183.37 L198.82,185.02 L196.33,186.83 L193.91,188.79 L191.57,190.90 L189.32,193.16 L187.18,195.58 L185.15,198.13 L183.25,200.83 L181.50,203.67 L179.89,206.63 L178.45,209.70 L177.17,212.89 L176.09,216.18 L175.19,219.55 L174.49,223.00 L174.01,226.51 L173.74,230.07 L173.69,233.66 L173.86,237.27 L174.26,240.88 L174.90,244.48 L175.76,248.04 L176.85,251.56 L178.17,255.01 L179.72,258.38 L181.48,261.65 L183.45,264.81 L185.63,267.84 L187.99,270.73 L190.55,273.45Z" fill="#b7c21c" clip-path="url(#bgclip)"/><line x1="303.2" y1="285.6" x2="307.8" y2="285.6" stroke="#999" stroke-width="0.9"/><text x="302.8" y="292.2" font-size="9.5" fill="#888" font-family="Liberation Sans">x</text><path d="M233.45,220.12 L298.98,280.98 L238.12,215.45Z" fill="#777"/><circle cx="235.78" cy="217.78" r="3.30" fill="#777"/><g fill="#d2d2d2"><circle cx="321.5" cy="320" r="3.24"/></g><g stroke="#d2d2d2" stroke-width="1.89"><line x1="317.34" y1="318.28" x2="325.66" y2="321.72"/><line x1="319.78" y1="315.84" x2="323.22" y2="324.16"/><line x1="323.22" y1="315.84" x2="319.78" y2="324.16"/><line x1="325.66" y1="318.28" x2="317.34" y2="321.72"/></g><circle cx="321.5" cy="320" r="1.49" fill="#fff"/><g fill="#d2d2d2"><rect x="331.85" y="315" width="4.90" height="1.46"/><rect x="332.69" y="316.04" width="3.22" height="4.68"/><path d="M332.69,320.20 L330.80,322.07 L337.80,322.07 L335.91,320.20Z"/><rect x="333.74" y="321.86" width="1.12" height="3.54"/></g></svg>

<div class="th" style="left:64px;top:395px;letter-spacing:-0.6px">Channel <svg width="10" height="6" viewBox="0 0 10 6" style="margin-left:2px;vertical-align:-2px"><path d="M1 0.6 H9 L5 5Z" fill="#1b1b2a"/></svg></div>
<div class="th" style="left:252px;top:395px">ID<svg width="8" height="10" viewBox="0 0 8 10" style="margin-left:5px;vertical-align:-1px"><path d="M4 0 L8 4 L0 4Z M0 6 L8 6 L4 10Z" fill="#c8c8c8"/></svg></div>
<div class="th" style="left:249px;top:395px;width:200px;text-align:center;letter-spacing:-0.25px">Last<br>Value<svg width="8" height="10" viewBox="0 0 8 10" style="margin-left:5px;vertical-align:-1px"><path d="M4 0 L8 4 L0 4Z M0 6 L8 6 L4 10Z" fill="#c8c8c8"/></svg></div>
<div class="th" style="left:549px;top:395px">Minimum<svg width="8" height="10" viewBox="0 0 8 10" style="margin-left:5px;vertical-align:-1px"><path d="M4 0 L8 4 L0 4Z M0 6 L8 6 L4 10Z" fill="#c8c8c8"/></svg></div>
<div class="th" style="left:780px;top:395px">Maximum<svg width="8" height="10" viewBox="0 0 8 10" style="margin-left:5px;vertical-align:-1px"><path d="M4 0 L8 4 L0 4Z M0 6 L8 6 L4 10Z" fill="#c8c8c8"/></svg></div>
<div class="hl" style="top:432px"></div><div class="hl" style="top:466px"></div><div class="hl" style="top:499px"></div><div class="hl" style="top:533px"></div><div class="hl" style="top:566px"></div><div class="hl" style="top:600px"></div><div class="hl" style="top:633px"></div><div class="hl" style="top:666px"></div><div class="hl" style="top:700px"></div><div class="hl" style="top:733px"></div><div class="hl" style="top:767px"></div><div class="hl" style="top:800px"></div><div class="hl" style="top:834px"></div><div class="hl" style="top:867px"></div>
<div class="tr" style="top:431.60px"><span class="c1">Age of Code</span><span class="c2">10</span><span class="c3">29 h 16 m</span><span class="c4">9 m 30 s</span><span class="c5">31 d</span><svg class="cog" width="16" height="14" viewBox="0 0 16 14"><g fill="#444"><circle cx="9.6" cy="5" r="3.9"/><circle cx="3.9" cy="10.7" r="2.5"/></g><g stroke="#444" stroke-width="1.5"><line x1="9.6" y1="0.3" x2="9.6" y2="9.7"/><line x1="4.9" y1="5" x2="14.3" y2="5"/><line x1="6.3" y1="1.7" x2="12.9" y2="8.3"/><line x1="12.9" y1="1.7" x2="6.3" y2="8.3"/><line x1="3.9" y1="7.6" x2="3.9" y2="13.8"/><line x1="0.8" y1="10.7" x2="7" y2="10.7"/><line x1="1.7" y1="8.5" x2="6.1" y2="12.9"/><line x1="6.1" y1="8.5" x2="1.7" y2="12.9"/></g><circle cx="9.6" cy="5" r="2" fill="#fff"/><circle cx="3.9" cy="10.7" r="1" fill="#fff"/></svg></div><div class="tr" style="top:465.03px"><span class="c1">Committed Memory</span><span class="c2">4</span><span class="c3">513 MByte</span><span class="c4">107 MByte</span><span class="c5">748 MByte</span><svg class="cog" width="16" height="14" viewBox="0 0 16 14"><g fill="#444"><circle cx="9.6" cy="5" r="3.9"/><circle cx="3.9" cy="10.7" r="2.5"/></g><g stroke="#444" stroke-width="1.5"><line x1="9.6" y1="0.3" x2="9.6" y2="9.7"/><line x1="4.9" y1="5" x2="14.3" y2="5"/><line x1="6.3" y1="1.7" x2="12.9" y2="8.3"/><line x1="12.9" y1="1.7" x2="6.3" y2="8.3"/><line x1="3.9" y1="7.6" x2="3.9" y2="13.8"/><line x1="0.8" y1="10.7" x2="7" y2="10.7"/><line x1="1.7" y1="8.5" x2="6.1" y2="12.9"/><line x1="6.1" y1="8.5" x2="1.7" y2="12.9"/></g><circle cx="9.6" cy="5" r="2" fill="#fff"/><circle cx="3.9" cy="10.7" r="1" fill="#fff"/></svg></div><div class="tr" style="top:498.46px"><span class="c1">Configuration Last Saved</span><span class="c2">11</span><span class="c3">9 h 36 m</span><span class="c4">93 s</span><span class="c5">18 h 50 m</span><svg class="cog" width="16" height="14" viewBox="0 0 16 14"><g fill="#444"><circle cx="9.6" cy="5" r="3.9"/><circle cx="3.9" cy="10.7" r="2.5"/></g><g stroke="#444" stroke-width="1.5"><line x1="9.6" y1="0.3" x2="9.6" y2="9.7"/><line x1="4.9" y1="5" x2="14.3" y2="5"/><line x1="6.3" y1="1.7" x2="12.9" y2="8.3"/><line x1="12.9" y1="1.7" x2="6.3" y2="8.3"/><line x1="3.9" y1="7.6" x2="3.9" y2="13.8"/><line x1="0.8" y1="10.7" x2="7" y2="10.7"/><line x1="1.7" y1="8.5" x2="6.1" y2="12.9"/><line x1="6.1" y1="8.5" x2="1.7" y2="12.9"/></g><circle cx="9.6" cy="5" r="2" fill="#fff"/><circle cx="3.9" cy="10.7" r="1" fill="#fff"/></svg></div><div class="tr" style="top:531.89px"><span class="c1">CPU Load</span><span class="c2">5</span><span class="c3">0 %</span><span class="c4">0 %</span><span class="c5">100 %</span><svg class="cog" width="16" height="14" viewBox="0 0 16 14"><g fill="#444"><circle cx="9.6" cy="5" r="3.9"/><circle cx="3.9" cy="10.7" r="2.5"/></g><g stroke="#444" stroke-width="1.5"><line x1="9.6" y1="0.3" x2="9.6" y2="9.7"/><line x1="4.9" y1="5" x2="14.3" y2="5"/><line x1="6.3" y1="1.7" x2="12.9" y2="8.3"/><line x1="12.9" y1="1.7" x2="6.3" y2="8.3"/><line x1="3.9" y1="7.6" x2="3.9" y2="13.8"/><line x1="0.8" y1="10.7" x2="7" y2="10.7"/><line x1="1.7" y1="8.5" x2="6.1" y2="12.9"/><line x1="6.1" y1="8.5" x2="1.7" y2="12.9"/></g><circle cx="9.6" cy="5" r="2" fill="#fff"/><circle cx="3.9" cy="10.7" r="1" fill="#fff"/></svg></div><div class="tr" style="top:565.32px"><span class="c1">Downtime</span><span class="c2">-4</span><span class="c3"></span><span class="c4"></span><span class="c5"></span><svg class="cog" width="16" height="14" viewBox="0 0 16 14"><g fill="#444"><circle cx="9.6" cy="5" r="3.9"/><circle cx="3.9" cy="10.7" r="2.5"/></g><g stroke="#444" stroke-width="1.5"><line x1="9.6" y1="0.3" x2="9.6" y2="9.7"/><line x1="4.9" y1="5" x2="14.3" y2="5"/><line x1="6.3" y1="1.7" x2="12.9" y2="8.3"/><line x1="12.9" y1="1.7" x2="6.3" y2="8.3"/><line x1="3.9" y1="7.6" x2="3.9" y2="13.8"/><line x1="0.8" y1="10.7" x2="7" y2="10.7"/><line x1="1.7" y1="8.5" x2="6.1" y2="12.9"/><line x1="6.1" y1="8.5" x2="1.7" y2="12.9"/></g><circle cx="9.6" cy="5" r="2" fill="#fff"/><circle cx="3.9" cy="10.7" r="1" fill="#fff"/></svg></div><div class="tr" style="top:598.75px"><span class="c1">Free Page File Memory</span><span class="c2">2</span><span class="c3">3.390 MByte</span><span class="c4">2.180 MByte</span><span class="c5">4.119 MByte</span><svg class="cog" width="16" height="14" viewBox="0 0 16 14"><g fill="#444"><circle cx="9.6" cy="5" r="3.9"/><circle cx="3.9" cy="10.7" r="2.5"/></g><g stroke="#444" stroke-width="1.5"><line x1="9.6" y1="0.3" x2="9.6" y2="9.7"/><line x1="4.9" y1="5" x2="14.3" y2="5"/><line x1="6.3" y1="1.7" x2="12.9" y2="8.3"/><line x1="12.9" y1="1.7" x2="6.3" y2="8.3"/><line x1="3.9" y1="7.6" x2="3.9" y2="13.8"/><line x1="0.8" y1="10.7" x2="7" y2="10.7"/><line x1="1.7" y1="8.5" x2="6.1" y2="12.9"/><line x1="6.1" y1="8.5" x2="1.7" y2="12.9"/></g><circle cx="9.6" cy="5" r="2" fill="#fff"/><circle cx="3.9" cy="10.7" r="1" fill="#fff"/></svg></div><div class="tr" style="top:632.18px"><span class="c1">Free Physical Memory</span><span class="c2">3</span><span class="c3">2.826 MByte</span><span class="c4">1.668 MByte</span><span class="c5">3.466 MByte</span><svg class="cog" width="16" height="14" viewBox="0 0 16 14"><g fill="#444"><circle cx="9.6" cy="5" r="3.9"/><circle cx="3.9" cy="10.7" r="2.5"/></g><g stroke="#444" stroke-width="1.5"><line x1="9.6" y1="0.3" x2="9.6" y2="9.7"/><line x1="4.9" y1="5" x2="14.3" y2="5"/><line x1="6.3" y1="1.7" x2="12.9" y2="8.3"/><line x1="12.9" y1="1.7" x2="6.3" y2="8.3"/><line x1="3.9" y1="7.6" x2="3.9" y2="13.8"/><line x1="0.8" y1="10.7" x2="7" y2="10.7"/><line x1="1.7" y1="8.5" x2="6.1" y2="12.9"/><line x1="6.1" y1="8.5" x2="1.7" y2="12.9"/></g><circle cx="9.6" cy="5" r="2" fill="#fff"/><circle cx="3.9" cy="10.7" r="1" fill="#fff"/></svg></div><div class="tr" style="top:665.61px"><span class="c1">Free Virtual Memory</span><span class="c2">1</span><span class="c3">3.393 MByte</span><span class="c4">3.146 MByte</span><span class="c5">3.787 MByte</span><svg class="cog" width="16" height="14" viewBox="0 0 16 14"><g fill="#444"><circle cx="9.6" cy="5" r="3.9"/><circle cx="3.9" cy="10.7" r="2.5"/></g><g stroke="#444" stroke-width="1.5"><line x1="9.6" y1="0.3" x2="9.6" y2="9.7"/><line x1="4.9" y1="5" x2="14.3" y2="5"/><line x1="6.3" y1="1.7" x2="12.9" y2="8.3"/><line x1="12.9" y1="1.7" x2="6.3" y2="8.3"/><line x1="3.9" y1="7.6" x2="3.9" y2="13.8"/><line x1="0.8" y1="10.7" x2="7" y2="10.7"/><line x1="1.7" y1="8.5" x2="6.1" y2="12.9"/><line x1="6.1" y1="8.5" x2="1.7" y2="12.9"/></g><circle cx="9.6" cy="5" r="2" fill="#fff"/><circle cx="3.9" cy="10.7" r="1" fill="#fff"/></svg></div><div class="tr" style="top:699.04px"><span class="c1">Handles</span><span class="c2">6</span><span class="c3">558 #</span><span class="c4">541 #</span><span class="c5">4.319 #</span><svg class="cog" width="16" height="14" viewBox="0 0 16 14"><g fill="#444"><circle cx="9.6" cy="5" r="3.9"/><circle cx="3.9" cy="10.7" r="2.5"/></g><g stroke="#444" stroke-width="1.5"><line x1="9.6" y1="0.3" x2="9.6" y2="9.7"/><line x1="4.9" y1="5" x2="14.3" y2="5"/><line x1="6.3" y1="1.7" x2="12.9" y2="8.3"/><line x1="12.9" y1="1.7" x2="6.3" y2="8.3"/><line x1="3.9" y1="7.6" x2="3.9" y2="13.8"/><line x1="0.8" y1="10.7" x2="7" y2="10.7"/><line x1="1.7" y1="8.5" x2="6.1" y2="12.9"/><line x1="6.1" y1="8.5" x2="1.7" y2="12.9"/></g><circle cx="9.6" cy="5" r="2" fill="#fff"/><circle cx="3.9" cy="10.7" r="1" fill="#fff"/></svg></div><div class="tr" style="top:732.47px"><span class="c1">Health</span><span class="c2">0</span><span class="c3">100 %</span><span class="c4">0 %</span><span class="c5">100 %</span><svg class="cog" width="16" height="14" viewBox="0 0 16 14"><g fill="#444"><circle cx="9.6" cy="5" r="3.9"/><circle cx="3.9" cy="10.7" r="2.5"/></g><g stroke="#444" stroke-width="1.5"><line x1="9.6" y1="0.3" x2="9.6" y2="9.7"/><line x1="4.9" y1="5" x2="14.3" y2="5"/><line x1="6.3" y1="1.7" x2="12.9" y2="8.3"/><line x1="12.9" y1="1.7" x2="6.3" y2="8.3"/><line x1="3.9" y1="7.6" x2="3.9" y2="13.8"/><line x1="0.8" y1="10.7" x2="7" y2="10.7"/><line x1="1.7" y1="8.5" x2="6.1" y2="12.9"/><line x1="6.1" y1="8.5" x2="1.7" y2="12.9"/></g><circle cx="9.6" cy="5" r="2" fill="#fff"/><circle cx="3.9" cy="10.7" r="1" fill="#fff"/></svg></div><div class="tr" style="top:765.90px"><span class="c1">Maintenance Days</span><span class="c2">9</span><span class="c3">4.601 #</span><span class="c4">4.601 #</span><span class="c5">4.711 #</span><svg class="cog" width="16" height="14" viewBox="0 0 16 14"><g fill="#444"><circle cx="9.6" cy="5" r="3.9"/><circle cx="3.9" cy="10.7" r="2.5"/></g><g stroke="#444" stroke-width="1.5"><line x1="9.6" y1="0.3" x2="9.6" y2="9.7"/><line x1="4.9" y1="5" x2="14.3" y2="5"/><line x1="6.3" y1="1.7" x2="12.9" y2="8.3"/><line x1="12.9" y1="1.7" x2="6.3" y2="8.3"/><line x1="3.9" y1="7.6" x2="3.9" y2="13.8"/><line x1="0.8" y1="10.7" x2="7" y2="10.7"/><line x1="1.7" y1="8.5" x2="6.1" y2="12.9"/><line x1="6.1" y1="8.5" x2="1.7" y2="12.9"/></g><circle cx="9.6" cy="5" r="2" fill="#fff"/><circle cx="3.9" cy="10.7" r="1" fill="#fff"/></svg></div><div class="tr" style="top:799.33px"><span class="c1">Raw Data Buffer</span><span class="c2">8</span><span class="c3">0 #</span><span class="c4">0 #</span><span class="c5">169 #</span><svg class="cog" width="16" height="14" viewBox="0 0 16 14"><g fill="#444"><circle cx="9.6" cy="5" r="3.9"/><circle cx="3.9" cy="10.7" r="2.5"/></g><g stroke="#444" stroke-width="1.5"><line x1="9.6" y1="0.3" x2="9.6" y2="9.7"/><line x1="4.9" y1="5" x2="14.3" y2="5"/><line x1="6.3" y1="1.7" x2="12.9" y2="8.3"/><line x1="12.9" y1="1.7" x2="6.3" y2="8.3"/><line x1="3.9" y1="7.6" x2="3.9" y2="13.8"/><line x1="0.8" y1="10.7" x2="7" y2="10.7"/><line x1="1.7" y1="8.5" x2="6.1" y2="12.9"/><line x1="6.1" y1="8.5" x2="1.7" y2="12.9"/></g><circle cx="9.6" cy="5" r="2" fill="#fff"/><circle cx="3.9" cy="10.7" r="1" fill="#fff"/></svg></div><div class="tr" style="top:832.76px"><span class="c1">Threads</span><span class="c2">7</span><span class="c3">70 #</span><span class="c4">59 #</span><span class="c5">92 #</span><svg class="cog" width="16" height="14" viewBox="0 0 16 14"><g fill="#444"><circle cx="9.6" cy="5" r="3.9"/><circle cx="3.9" cy="10.7" r="2.5"/></g><g stroke="#444" stroke-width="1.5"><line x1="9.6" y1="0.3" x2="9.6" y2="9.7"/><line x1="4.9" y1="5" x2="14.3" y2="5"/><line x1="6.3" y1="1.7" x2="12.9" y2="8.3"/><line x1="12.9" y1="1.7" x2="6.3" y2="8.3"/><line x1="3.9" y1="7.6" x2="3.9" y2="13.8"/><line x1="0.8" y1="10.7" x2="7" y2="10.7"/><line x1="1.7" y1="8.5" x2="6.1" y2="12.9"/><line x1="6.1" y1="8.5" x2="1.7" y2="12.9"/></g><circle cx="9.6" cy="5" r="2" fill="#fff"/><circle cx="3.9" cy="10.7" r="1" fill="#fff"/></svg></div>

</body></html>
